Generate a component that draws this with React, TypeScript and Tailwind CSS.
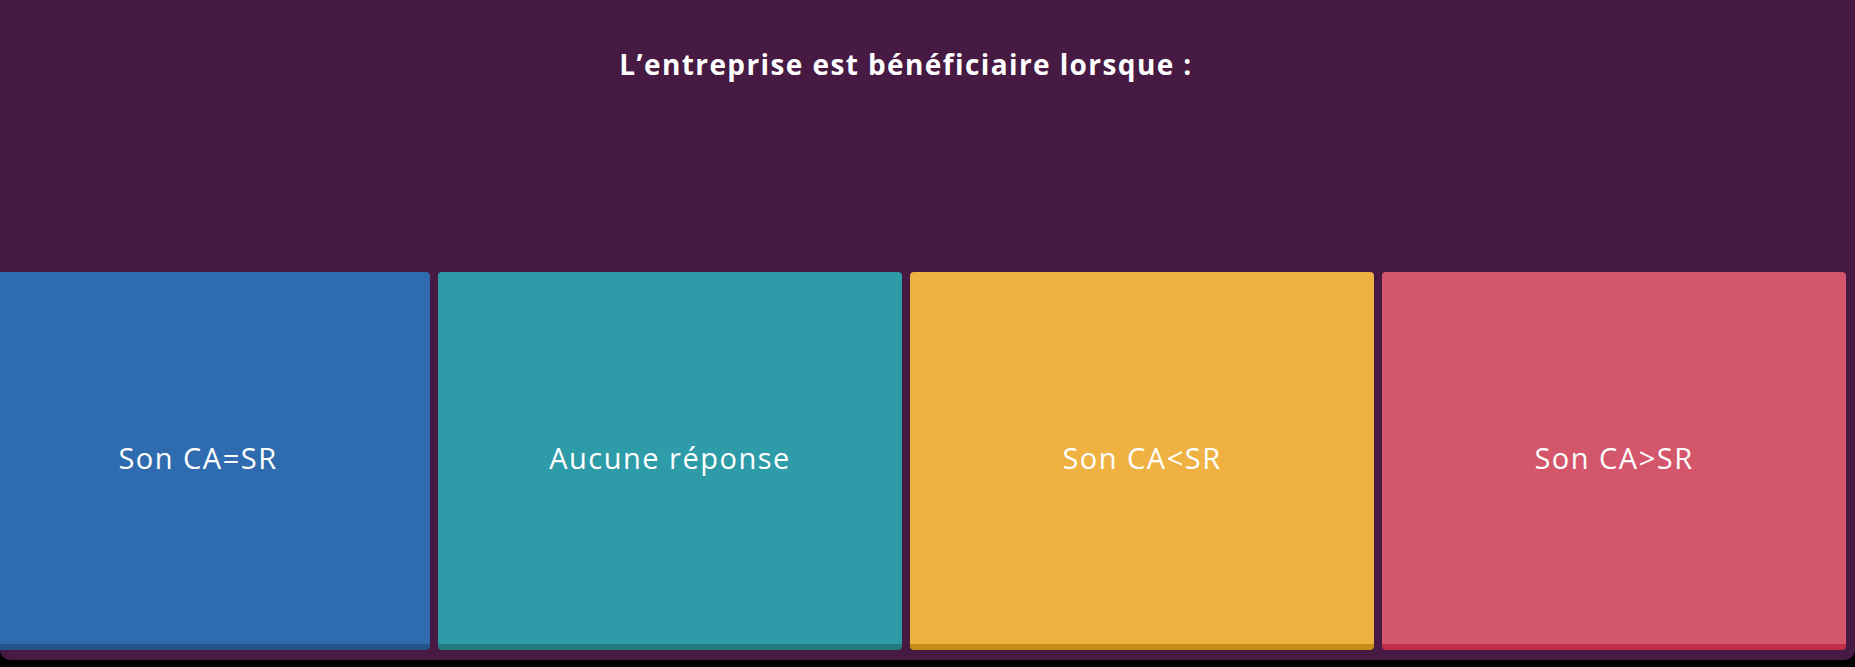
import React from "react";

const cards = [
  { label: "Son CA=SR", bg: "bg-[#2f6caf]", border: "border-[#23548a]" },
  { label: "Aucune réponse", bg: "bg-[#2d9ca8]", border: "border-[#237b80]" },
  { label: "Son CA<SR", bg: "bg-[#eeb142]", border: "border-[#c98a17]" },
  { label: "Son CA>SR", bg: "bg-[#d4566a]", border: "border-[#c12e47]" },
];

export default function App() {
  return (
    <div className="w-[1855px] h-[667px] bg-black overflow-hidden" style={{ fontFamily: "'Open Sans', 'Noto Sans', sans-serif" }}>
      <div className="w-full h-[660px] bg-[#461a42] rounded-b-[10px] overflow-hidden">
        <div className="w-[1880px] ml-[-34px] flex flex-col">
          <div className="h-[272px] pt-[45px] text-center text-white font-bold text-[28px] leading-[38px] tracking-[1.4px]">
            L’entreprise est bénéficiaire lorsque :
          </div>
          <div className="flex gap-[8px]">
            {cards.map((c) => (
              <div
                key={c.label}
                className={`w-[464px] h-[378px] rounded-[4px] border-b-[6px] ${c.bg} ${c.border} flex items-center justify-center text-white text-[29px] tracking-[1.5px]`}
              >
                {c.label}
              </div>
            ))}
          </div>
        </div>
      </div>
    </div>
  );
}
